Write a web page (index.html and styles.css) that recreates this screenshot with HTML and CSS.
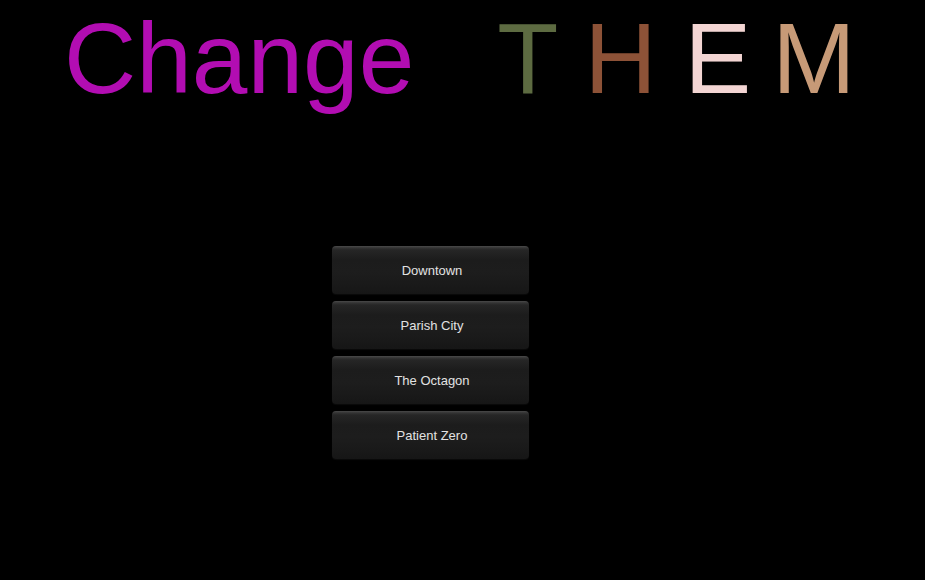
FILE: index.html
```html
<!DOCTYPE html>
<html>
<head>
<meta charset="utf-8">
<link rel="stylesheet" href="styles.css">
</head>
<body>
<div class="page">
  <h1 class="title">
    <span class="change">Change</span>
    <span class="l l-t">T</span>
    <span class="l l-h">H</span>
    <span class="l l-e">E</span>
    <span class="l l-m">M</span>
  </h1>
  <nav class="menu">
    <button class="btn">Downtown</button>
    <button class="btn">Parish City</button>
    <button class="btn">The Octagon</button>
    <button class="btn">Patient Zero</button>
  </nav>
</div>
</body>
</html>
```
FILE: styles.css
```css
html, body {
  margin: 0;
  padding: 0;
  background: #000;
}
.page {
  width: 925px;
  height: 580px;
  overflow: hidden;
  font-family: "Liberation Sans", Arial, sans-serif;
}
.title {
  display: flex;
  margin: 0;
  padding: 8px 0 0 64px;
  font-size: 100px;
  font-weight: normal;
  line-height: 100px;
  white-space: pre;
}
.change { color: #b20db2; }
.l-t { color: #5d6b41; margin-left: 83px; }
.l-h { color: #8d5237; margin-left: 26px; }
.l-e { color: #f3d5d3; margin-left: 28px; }
.l-m { color: #c79a77; margin-left: 21px; }
.menu {
  display: flex;
  flex-direction: column;
  gap: 7px;
  width: 197px;
  margin: 138px 0 0 332px;
}
.btn {
  height: 48px;
  padding: 0 0 0 3px;
  border: 0;
  border-radius: 4px;
  background: linear-gradient(to bottom, #4a4a4a 0px, #333 2px, #262626 4px, #1c1c1c 14px, #1d1d1d 26px, #191919 40px, #161616 48px);
  color: #e2e2e2;
  font-family: "Liberation Sans", Arial, sans-serif;
  font-size: 13px;
  text-align: center;
  box-shadow: 0 1px 1px rgba(255,255,255,0.04);
}
```
